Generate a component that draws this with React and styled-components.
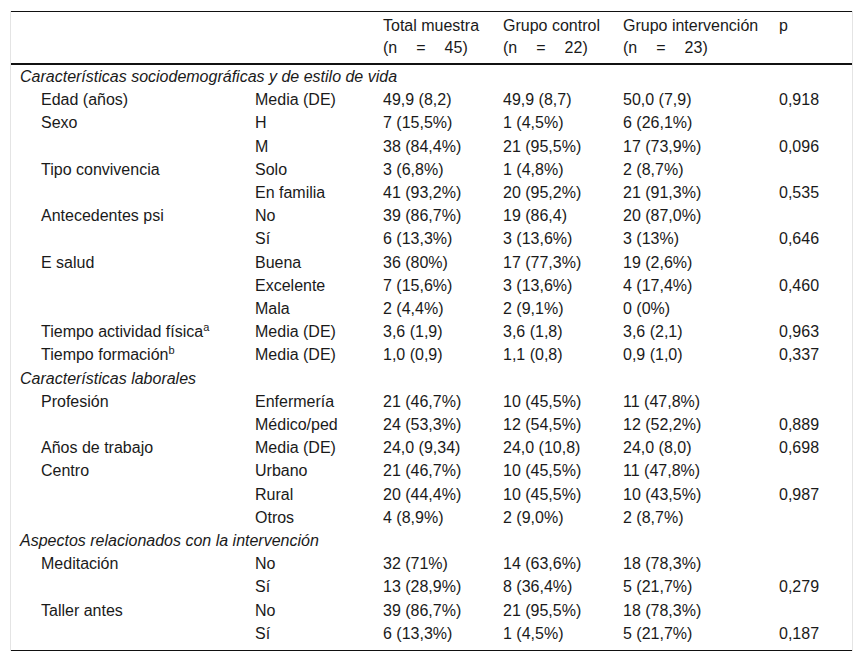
import React from 'react';
import styled, { createGlobalStyle } from 'styled-components';

const GlobalStyle = createGlobalStyle`
  body {
    margin: 0;
    background: #fff;
    font-family: "Liberation Sans", Arial, Helvetica, sans-serif;
    color: #1a1a1a;
  }
`;

const Frame = styled.div`
  margin: 11px 0 0 10px;
  width: 843px;
  border-left: 1px solid #e4e4e4;
  border-right: 1px solid #e4e4e4;
  box-sizing: border-box;
`;

const Table = styled.table`
  width: 100%;
  border-collapse: collapse;
  table-layout: fixed;
  font-size: 16px;
  border-top: 1px solid #111;
  border-bottom: 1px solid #111;

  tbody tr:last-child td {
    padding-bottom: 7px;
  }
`;

const Head = styled.thead`
  border-bottom: 2px solid #111;
`;

const HeadCell = styled.th`
  text-align: left;
  font-weight: normal;
  vertical-align: top;
  padding: 3px 0 4px 9px;
  line-height: 22px;
`;

const NLine = styled.span`
  display: inline-flex;
  gap: 19px;
  white-space: nowrap;
`;

const Cell = styled.td`
  padding: 2px 0 2px ${(p) => (p.$indent ? '30px' : '9px')};
  line-height: 19.2px;
  white-space: nowrap;
  vertical-align: top;
`;

const SectionCell = styled.td`
  padding: 2px 0 2px 9px;
  line-height: 19.2px;
  font-style: italic;
  white-space: nowrap;
`;

const Sup = styled.sup`
  font-size: 11px;
  line-height: 0;
  vertical-align: 6px;
`;

const sections = [
  {
    title: 'Características sociodemográficas y de estilo de vida',
    rows: [
      ['Edad (años)', 'Media (DE)', '49,9 (8,2)', '49,9 (8,7)', '50,0 (7,9)', '0,918'],
      ['Sexo', 'H', '7 (15,5%)', '1 (4,5%)', '6 (26,1%)', ''],
      ['', 'M', '38 (84,4%)', '21 (95,5%)', '17 (73,9%)', '0,096'],
      ['Tipo convivencia', 'Solo', '3 (6,8%)', '1 (4,8%)', '2 (8,7%)', ''],
      ['', 'En familia', '41 (93,2%)', '20 (95,2%)', '21 (91,3%)', '0,535'],
      ['Antecedentes psi', 'No', '39 (86,7%)', '19 (86,4)', '20 (87,0%)', ''],
      ['', 'Sí', '6 (13,3%)', '3 (13,6%)', '3 (13%)', '0,646'],
      ['E salud', 'Buena', '36 (80%)', '17 (77,3%)', '19 (2,6%)', ''],
      ['', 'Excelente', '7 (15,6%)', '3 (13,6%)', '4 (17,4%)', '0,460'],
      ['', 'Mala', '2 (4,4%)', '2 (9,1%)', '0 (0%)', ''],
      [['Tiempo actividad física', 'a'], 'Media (DE)', '3,6 (1,9)', '3,6 (1,8)', '3,6 (2,1)', '0,963'],
      [['Tiempo formación', 'b'], 'Media (DE)', '1,0 (0,9)', '1,1 (0,8)', '0,9 (1,0)', '0,337'],
    ],
  },
  {
    title: 'Características laborales',
    rows: [
      ['Profesión', 'Enfermería', '21 (46,7%)', '10 (45,5%)', '11 (47,8%)', ''],
      ['', 'Médico/ped', '24 (53,3%)', '12 (54,5%)', '12 (52,2%)', '0,889'],
      ['Años de trabajo', 'Media (DE)', '24,0 (9,34)', '24,0 (10,8)', '24,0 (8,0)', '0,698'],
      ['Centro', 'Urbano', '21 (46,7%)', '10 (45,5%)', '11 (47,8%)', ''],
      ['', 'Rural', '20 (44,4%)', '10 (45,5%)', '10 (43,5%)', '0,987'],
      ['', 'Otros', '4 (8,9%)', '2 (9,0%)', '2 (8,7%)', ''],
    ],
  },
  {
    title: 'Aspectos relacionados con la intervención',
    rows: [
      ['Meditación', 'No', '32 (71%)', '14 (63,6%)', '18 (78,3%)', ''],
      ['', 'Sí', '13 (28,9%)', '8 (36,4%)', '5 (21,7%)', '0,279'],
      ['Taller antes', 'No', '39 (86,7%)', '21 (95,5%)', '18 (78,3%)', ''],
      ['', 'Sí', '6 (13,3%)', '1 (4,5%)', '5 (21,7%)', '0,187'],
    ],
  },
];

const groups = [
  { label: 'Total muestra', n: '45' },
  { label: 'Grupo control', n: '22' },
  { label: 'Grupo intervención', n: '23' },
];

const Label = ({ value }) =>
  Array.isArray(value) ? (
    <>
      {value[0]}
      <Sup>{value[1]}</Sup>
    </>
  ) : (
    value
  );

export default function App() {
  return (
    <>
      <GlobalStyle />
      <Frame>
        <Table>
          <colgroup>
            <col style={{ width: 235 }} />
            <col style={{ width: 128 }} />
            <col style={{ width: 120 }} />
            <col style={{ width: 120 }} />
            <col style={{ width: 156 }} />
            <col />
          </colgroup>
          <Head>
            <tr>
              <HeadCell />
              <HeadCell />
              {groups.map((g) => (
                <HeadCell key={g.label}>
                  {g.label}
                  <br />
                  <NLine>
                    <span>(n</span>
                    <span>=</span>
                    <span>{g.n})</span>
                  </NLine>
                </HeadCell>
              ))}
              <HeadCell>p</HeadCell>
            </tr>
          </Head>
          <tbody>
            {sections.map((s) => (
              <React.Fragment key={s.title}>
                <tr>
                  <SectionCell colSpan={6}>{s.title}</SectionCell>
                </tr>
                {s.rows.map((r, i) => (
                  <tr key={i}>
                    <Cell $indent>
                      <Label value={r[0]} />
                    </Cell>
                    {r.slice(1).map((v, j) => (
                      <Cell key={j}>{v}</Cell>
                    ))}
                  </tr>
                ))}
              </React.Fragment>
            ))}
          </tbody>
        </Table>
      </Frame>
    </>
  );
}
